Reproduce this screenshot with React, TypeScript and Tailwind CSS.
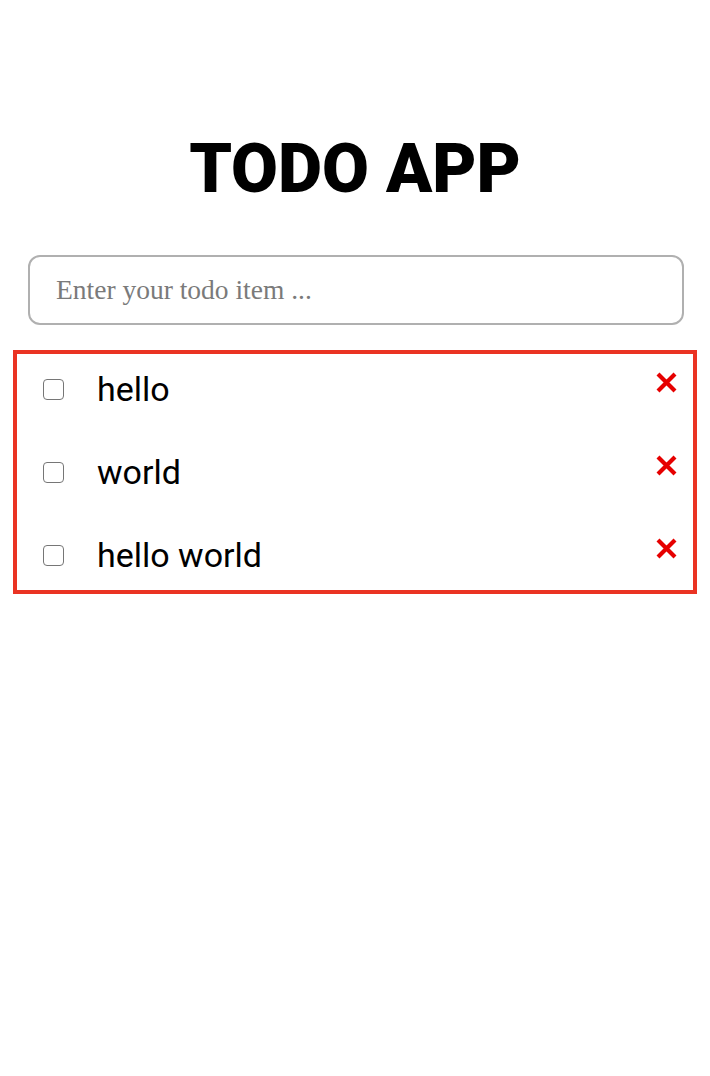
const todos = ['hello', 'world', 'hello world']

function RemoveIcon() {
  return (
    <svg width="23" height="23" viewBox="0 0 23 23" className="text-[#e60000]">
      <path d="M3 3 L20 20 M20 3 L3 20" stroke="currentColor" strokeWidth="4.2" strokeLinecap="butt" />
    </svg>
  )
}

export default function App() {
  return (
    <div className="min-h-[1076px] bg-white px-[13px] pt-[129px]">
      <h1 className="text-center font-['Roboto',sans-serif] text-[68px] font-black leading-[80px] text-black">TODO APP</h1>
      <div className="mt-[46px] pl-[15px] pr-[13px]">
        <input
          type="text"
          placeholder="Enter your todo item ..."
          className="h-[70px] w-full rounded-[12px] border-2 border-[#b0b0b0] px-[26px] font-['Liberation_Serif',serif] text-[27.5px] text-black outline-none placeholder:text-[#7a7a7a]"
        />
      </div>
      <ul className="mt-[25px] flex flex-col gap-[13px] border-4 border-[#ea3323]">
        {todos.map((t) => (
          <li key={t} className="flex h-[70px] items-center pl-[26px] pr-[15px]">
            <span className="h-[21px] w-[21px] shrink-0 rounded-[4px] border-[1.5px] border-[#767676] bg-white" />
            <span className="ml-[33px] flex-1 font-['Roboto',sans-serif] text-[34px] text-black">{t}</span>
            <span className="-mt-[14px]">
              <RemoveIcon />
            </span>
          </li>
        ))}
      </ul>
    </div>
  )
}
